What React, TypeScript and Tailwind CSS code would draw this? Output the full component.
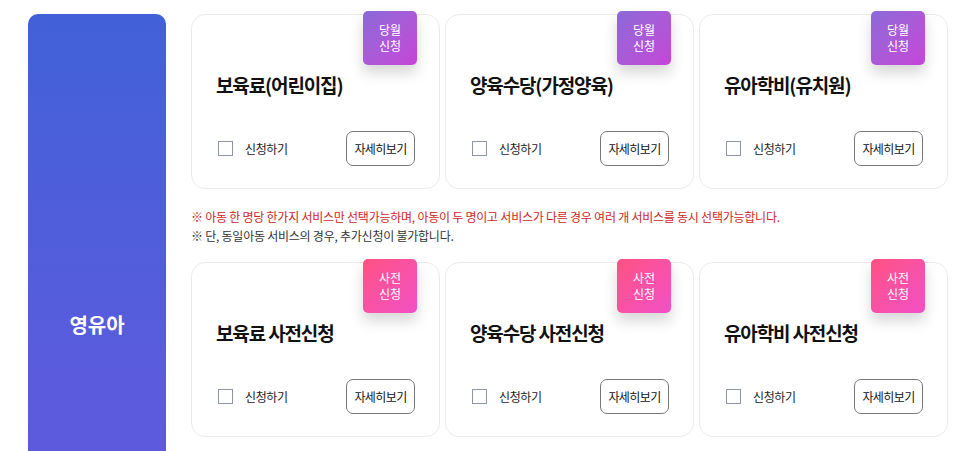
import React from "react";

type Service = { title: string };

const monthly: Service[] = [
  { title: "보육료(어린이집)" },
  { title: "양육수당(가정양육)" },
  { title: "유아학비(유치원)" },
];

const advance: Service[] = [
  { title: "보육료 사전신청" },
  { title: "양육수당 사전신청" },
  { title: "유아학비 사전신청" },
];

const ServiceCard = ({ title, badge, pink }: { title: string; badge: [string, string]; pink?: boolean }) => {
  return (
    <div className="relative h-[175px] rounded-[14px] border border-[#ebebeb] bg-white px-[24px] pt-[56px] pb-[24px]">
      <div
        className={
          pink
            ? "absolute -top-[4px] right-[22px] flex h-[54px] w-[54px] flex-col items-center justify-center rounded-[5px] bg-linear-to-br from-[#ff5182] to-[#f24fc6] text-[12px] leading-[16px] text-white shadow-[0_8px_14px_rgba(0,0,0,0.16)]"
            : "absolute -top-[4px] right-[22px] flex h-[54px] w-[54px] flex-col items-center justify-center rounded-[5px] bg-linear-to-br from-[#8a69d8] to-[#c644d7] text-[12px] leading-[16px] text-white shadow-[0_8px_14px_rgba(0,0,0,0.16)]"
        }
      >
        <span>{badge[0]}</span>
        <span>{badge[1]}</span>
      </div>
      <h3 className="text-[19px] leading-[28px] font-bold tracking-[-0.06em] text-[#111]">{title}</h3>
      <div className="mt-[32px] flex items-center justify-between">
        <label className="flex items-center gap-[12px] pl-[2px]">
          <span className="h-[15px] w-[15px] border-[1.5px] border-[#8d95ab] bg-white" />
          <span className="text-[12px] tracking-[-0.03em] text-[#222]">신청하기</span>
        </label>
        <button className="h-[35px] w-[69px] rounded-[7px] border border-[#777] bg-white text-[12px] tracking-[-0.05em] text-[#111]">
          자세히보기
        </button>
      </div>
    </div>
  );
};

export default function App() {
  return (
    <div
      className="h-[451px] overflow-hidden bg-white"
      style={{ fontFamily: '"Noto Sans CJK KR", "Noto Sans", sans-serif' }}
    >
      <div className="flex pt-[14px] pl-[28px]">
        <div className="flex h-[622px] w-[138px] shrink-0 items-center justify-center rounded-t-[10px] bg-linear-to-b from-[#4161d8] to-[#6857e0]">
          <span className="text-[20px] font-bold text-white">영유아</span>
        </div>
        <div className="ml-[25px] w-[757px]">
          <div className="grid grid-cols-3 gap-[5px]">
            {monthly.map((s) => (
              <ServiceCard key={s.title} title={s.title} badge={["당월", "신청"]} />
            ))}
          </div>
          <div className="mt-[18px] text-[12px] leading-[19px] tracking-[-0.02em]">
            <p className="text-[#cc1f1f]">
              ※ 아동 한 명당 한가지 서비스만 선택가능하며, 아동이 두 명이고 서비스가 다른 경우 여러 개 서비스를 동시 선택가능합니다.
            </p>
            <p className="text-[#333]">※ 단, 동일아동 서비스의 경우, 추가신청이 불가합니다.</p>
          </div>
          <div className="mt-[17px] grid grid-cols-3 gap-[5px]">
            {advance.map((s) => (
              <ServiceCard key={s.title} title={s.title} badge={["사전", "신청"]} pink />
            ))}
          </div>
        </div>
      </div>
    </div>
  );
}
